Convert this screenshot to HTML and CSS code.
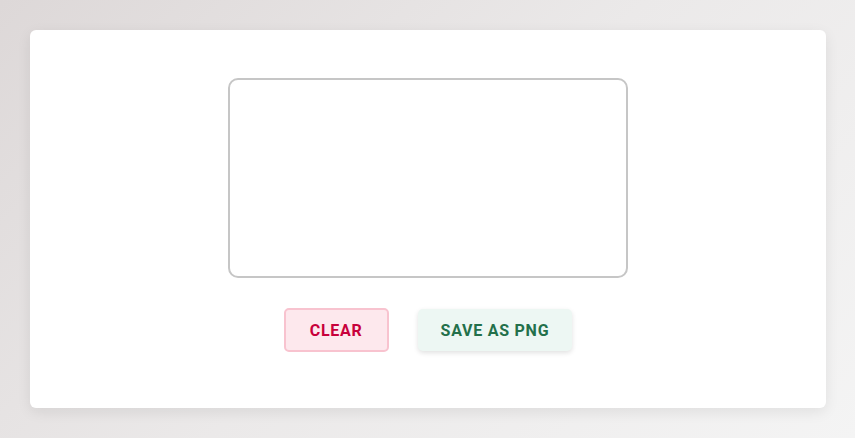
FILE: index.html
```html
<!DOCTYPE html>
<html>
<head>
<meta charset="utf-8">
<link rel="stylesheet" href="styles.css">
</head>
<body>
<main class="card">
  <canvas class="pad" width="396" height="196"></canvas>
  <div class="actions">
    <button class="btn btn-clear">CLEAR</button>
    <button class="btn btn-save">SAVE AS PNG</button>
  </div>
</main>
</body>
</html>
```
FILE: styles.css
```css
html, body {
  margin: 0;
  height: 100%;
}
body {
  background: linear-gradient(135deg, #ddd8d8 0%, #ebe9e9 50%, #f4f4f4 100%);
  font-family: "Roboto", "Inter", sans-serif;
  padding: 30px 29px 0 30px;
  box-sizing: border-box;
}
.card {
  background: #fff;
  border-radius: 6px;
  box-shadow: 0 4px 14px rgba(0, 0, 0, 0.08);
  height: 378px;
  box-sizing: border-box;
  padding-top: 48px;
  display: flex;
  flex-direction: column;
  align-items: center;
}
.pad {
  display: block;
  width: 396px;
  height: 196px;
  border: 2px solid #c6c6c6;
  border-radius: 10px;
  background: #fff;
}
.actions {
  margin-top: 30px;
  display: flex;
  gap: 29px;
  align-items: center;
}
.btn {
  font-family: "Roboto", "Inter", sans-serif;
  font-weight: 700;
  font-size: 16px;
  letter-spacing: 0.75px;
  height: 44px;
  padding: 0 24px;
  border-radius: 5px;
  cursor: pointer;
  box-sizing: border-box;
}
.btn-clear {
  background: #fde8ed;
  border: 2px solid #f8c3cf;
  color: #c8003b;
}
.btn-save {
  height: 42px;
  padding: 0 23px;
  background: #edf7f3;
  border: none;
  color: #23704a;
  box-shadow: 0 2px 5px rgba(0, 0, 0, 0.12);
}
```
